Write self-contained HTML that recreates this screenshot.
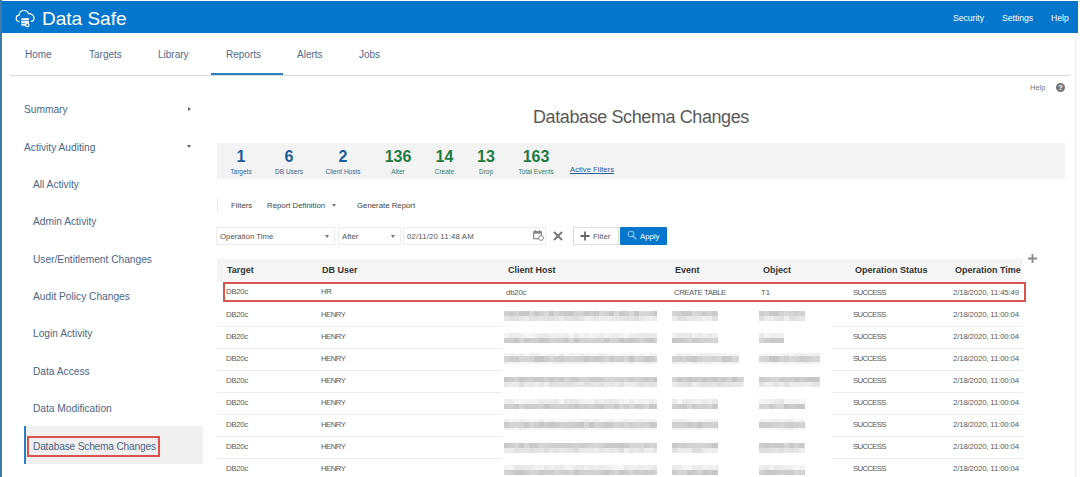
<!DOCTYPE html>
<html><head><meta charset="utf-8"><style>
*{margin:0;padding:0;box-sizing:border-box}
html,body{width:1080px;height:477px;overflow:hidden;background:#fff;font-family:"Liberation Sans",sans-serif;position:relative}
.a{position:absolute;white-space:nowrap}
.ht{color:#fff}
.nav{color:#4f6a8f;font-size:10px}
.side{color:#4b6688;font-size:10.2px}
.stn{font-weight:bold;font-size:16px;text-align:center}
.stl{font-size:6.5px;text-align:center}
.stl.blue{color:#3a6593}
.stl.green{color:#3a7a55}
.blue{color:#1d5d98}
.green{color:#1d7b45}
.tb{color:#444;font-size:7.8px}
.th{color:#333;font-weight:bold;font-size:9px}
.td{color:#5a5a5a;font-size:7.8px}
.sep{position:absolute;height:1px;background:#ececec}
.tri{position:absolute;width:0;height:0;border-top:3px solid #777;border-left:2.5px solid transparent;border-right:2.5px solid transparent}
</style></head><body>
<div class="a" style="left:2px;top:1px;width:1076px;height:32px;background:#0477cc"></div>
<div class="a" style="left:0;top:0;width:2px;height:477px;background:#3d7bab"></div>
<svg class="a" style="left:10px;top:4px" width="30" height="30" viewBox="0 0 30 30">
<path d="M9.4 17.6 C7.4 17.6 6.2 16.2 6.2 14.4 C6.2 12.6 7.4 11.3 9.1 11.2 C9.4 8.3 11.4 6.5 14 6.5 C16.3 6.5 17.9 7.8 18.5 9.7 C21.7 9.5 24 11.6 24 14 C24 16 22.7 17.3 20.8 17.5" fill="none" stroke="#fff" stroke-width="1.2"/>
<rect x="11.3" y="14.2" width="7.6" height="2" fill="#fff"/>
<rect x="11.3" y="16.9" width="7.6" height="2" fill="#fff"/>
<rect x="11.3" y="19.6" width="4.6" height="2" fill="#fff"/>
<rect x="11.3" y="22.2" width="4.6" height="0.1" fill="#fff"/>
<circle cx="17.3" cy="21" r="1.7" fill="none" stroke="#fff" stroke-width="1.2"/>
</svg>
<div class="a ht" style="left:42px;top:8px;font-size:19px">Data Safe</div>
<div class="a ht" style="left:953px;top:13px;font-size:8.6px">Security</div>
<div class="a ht" style="left:1002px;top:13px;font-size:8.6px">Settings</div>
<div class="a ht" style="left:1051px;top:13px;font-size:8.6px">Help</div>
<div class="a nav" style="left:25px;top:49px">Home</div>
<div class="a nav" style="left:89px;top:49px">Targets</div>
<div class="a nav" style="left:158px;top:49px">Library</div>
<div class="a nav" style="left:226px;top:49px">Reports</div>
<div class="a nav" style="left:297px;top:49px">Alerts</div>
<div class="a nav" style="left:359px;top:49px">Jobs</div>
<div class="a" style="left:10px;top:75px;width:1060px;height:1px;background:#d5d8dc"></div>
<div class="a" style="left:211px;top:73px;width:72px;height:2px;background:#2f7fc0"></div>
<div class="a side" style="left:24px;top:104px">Summary</div>
<div class="a" style="left:188px;top:107px;width:0;height:0;border-left:3.5px solid #666;border-top:2px solid transparent;border-bottom:2px solid transparent"></div>
<div class="a side" style="left:24px;top:142px">Activity Auditing</div>
<div class="a" style="left:187px;top:145px;width:0;height:0;border-top:3px solid #666;border-left:2px solid transparent;border-right:2px solid transparent"></div>
<div class="a side" style="left:33px;top:179px">All Activity</div>
<div class="a side" style="left:33px;top:216px">Admin Activity</div>
<div class="a side" style="left:33px;top:254px">User/Entitlement Changes</div>
<div class="a side" style="left:33px;top:291px">Audit Policy Changes</div>
<div class="a side" style="left:33px;top:328px">Login Activity</div>
<div class="a side" style="left:33px;top:366px">Data Access</div>
<div class="a side" style="left:33px;top:403px">Data Modification</div>
<div class="a" style="left:24px;top:426px;width:179px;height:38px;background:#f0f0f0;border-left:2px solid #2f7fc0"></div>
<div class="a" style="left:27px;top:436px;width:133px;height:21px;border:2px solid #d9534f"></div>
<div class="a side" style="left:33px;top:441px;letter-spacing:-0.2px">Database Schema Changes</div>
<div class="a" style="left:1030px;top:83px;font-size:7.5px;color:#777">Help</div>
<div class="a" style="left:1056px;top:83px;width:9px;height:9px;border-radius:50%;background:#777;color:#fff;font-size:7.5px;font-weight:bold;text-align:center;line-height:9px">?</div>
<div class="a" style="left:533px;top:107px;font-size:18px;letter-spacing:-0.4px;color:#5a5a5a">Database Schema Changes</div>
<div class="a" style="left:217px;top:143px;width:848px;height:36px;background:#f3f3f3"></div>
<div class="a stn blue" style="left:211px;top:148px;width:60px">1</div>
<div class="a stl blue" style="left:211px;top:168px;width:60px">Targets</div>
<div class="a stn blue" style="left:259px;top:148px;width:60px">6</div>
<div class="a stl blue" style="left:259px;top:168px;width:60px">DB Users</div>
<div class="a stn blue" style="left:313px;top:148px;width:60px">2</div>
<div class="a stl blue" style="left:313px;top:168px;width:60px">Client Hosts</div>
<div class="a stn green" style="left:368px;top:148px;width:60px">136</div>
<div class="a stl green" style="left:368px;top:168px;width:60px">Alter</div>
<div class="a stn green" style="left:414.5px;top:148px;width:60px">14</div>
<div class="a stl green" style="left:414.5px;top:168px;width:60px">Create</div>
<div class="a stn green" style="left:456px;top:148px;width:60px">13</div>
<div class="a stl green" style="left:456px;top:168px;width:60px">Drop</div>
<div class="a stn green" style="left:506px;top:148px;width:60px">163</div>
<div class="a stl green" style="left:506px;top:168px;width:60px">Total Events</div>
<div class="a" style="left:570px;top:165px;font-size:7.7px;color:#2c5e9a;text-decoration:underline">Active Filters</div>
<div class="a" style="left:217px;top:199px;width:1px;height:13px;background:#e6e6e6"></div>
<div class="a tb" style="left:231px;top:201px">Filters</div>
<div class="a tb" style="left:267px;top:201px">Report Definition</div>
<div class="tri" style="left:332px;top:204px"></div>
<div class="a tb" style="left:357px;top:201px">Generate Report</div>
<div class="a" style="left:216px;top:227px;width:119px;height:18px;border:1px solid #ececec"></div>
<div class="a tb" style="left:220px;top:232px;color:#555">Operation Time</div>
<div class="tri" style="left:325px;top:235px"></div>
<div class="a" style="left:338px;top:227px;width:63px;height:18px;border:1px solid #ececec"></div>
<div class="a tb" style="left:342px;top:232px;color:#555">After</div>
<div class="tri" style="left:391px;top:235px"></div>
<div class="a" style="left:403px;top:227px;width:143px;height:18px;border:1px solid #ececec"></div>
<div class="a tb" style="left:407px;top:232px;color:#555;letter-spacing:0.15px">02/11/20 11:48 AM</div>
<svg class="a" style="left:533px;top:230px" width="11" height="11" viewBox="0 0 11 11">
<rect x="0.7" y="1.7" width="7.6" height="7" fill="none" stroke="#888" stroke-width="1.2"/>
<rect x="0.7" y="1.7" width="7.6" height="2" fill="#888"/>
<line x1="2.5" y1="0" x2="2.5" y2="2" stroke="#888" stroke-width="1"/><line x1="6.5" y1="0" x2="6.5" y2="2" stroke="#888" stroke-width="1"/>
<circle cx="8" cy="8" r="2.4" fill="#fff" stroke="#888" stroke-width="1"/>
</svg>
<svg class="a" style="left:553px;top:231px" width="10" height="10" viewBox="0 0 10 10">
<path d="M1 1 L9 9 M9 1 L1 9" stroke="#777" stroke-width="2"/></svg>
<div class="a" style="left:573px;top:227px;width:46px;height:18px;border:1px solid #dcdcdc;background:#fff"></div>
<svg class="a" style="left:580px;top:231px" width="10" height="10" viewBox="0 0 10 10">
<path d="M5 0.5 V9.5 M0.5 5 H9.5" stroke="#666" stroke-width="1.8"/></svg>
<div class="a tb" style="left:593px;top:232px;color:#555">Filter</div>
<div class="a" style="left:620px;top:227px;width:47px;height:18px;background:#0477cc;border-radius:1px"></div>
<svg class="a" style="left:627px;top:230px" width="10" height="10" viewBox="0 0 10 10">
<circle cx="4" cy="4" r="2.8" fill="none" stroke="#8fc0ea" stroke-width="1.1"/><path d="M6 6 L9.3 9.3" stroke="#8fc0ea" stroke-width="1.3"/></svg>
<div class="a tb" style="left:640px;top:232px;color:#fff">Apply</div>
<div class="a" style="left:217px;top:259px;width:806px;height:23px;background:#f5f5f5"></div>
<div class="a th" style="left:227px;top:265px">Target</div>
<div class="a th" style="left:322px;top:265px">DB User</div>
<div class="a th" style="left:508px;top:265px">Client Host</div>
<div class="a th" style="left:675px;top:265px">Event</div>
<div class="a th" style="left:763px;top:265px">Object</div>
<div class="a th" style="left:855px;top:265px">Operation Status</div>
<div class="a th" style="left:955px;top:265px">Operation Time</div>
<svg class="a" style="left:1028px;top:254px" width="9" height="9" viewBox="0 0 9 9">
<path d="M4.5 0 V9 M0 4.5 H9" stroke="#888" stroke-width="1.8"/></svg>
<div class="a" style="left:223px;top:282px;width:803px;height:20px;border:2px solid #d9534f"></div>
<div class="a td" style="left:226px;top:287px;letter-spacing:-0.3px">DB20c</div>
<div class="a td" style="left:321px;top:287px;letter-spacing:-0.3px">HR</div>
<div class="a td" style="left:506px;top:288px;letter-spacing:-0.2px">db20c</div>
<div class="a td" style="left:674px;top:288px;letter-spacing:-0.45px">CREATE TABLE</div>
<div class="a td" style="left:761px;top:288px;">T1</div>
<div class="a td" style="left:853px;top:288px;letter-spacing:-0.7px">SUCCESS</div>
<div class="a td" style="left:953px;top:288px;letter-spacing:-0.15px">2/18/2020, 11:45:49</div>
<div class="a td" style="left:226px;top:310px;letter-spacing:-0.3px">DB20c</div>
<div class="a td" style="left:321px;top:310px;letter-spacing:-0.55px">HENRY</div>
<div class="a td" style="left:853px;top:310px;letter-spacing:-0.7px">SUCCESS</div>
<div class="a td" style="left:953px;top:310px;letter-spacing:-0.15px">2/18/2020, 11:00:04</div>
<svg class="a" style="left:504px;top:304px;filter:blur(0.6px)" width="153" height="20"><rect x="0" y="7" width="5" height="5" fill="#d0d0d0"/><rect x="5" y="7" width="5" height="5" fill="#cacaca"/><rect x="10" y="7" width="5" height="5" fill="#d2d2d2"/><rect x="15" y="7" width="5" height="5" fill="#c7c7c7"/><rect x="20" y="7" width="5" height="5" fill="#c8c8c8"/><rect x="25" y="7" width="5" height="5" fill="#d7d7d7"/><rect x="30" y="7" width="5" height="5" fill="#c9c9c9"/><rect x="35" y="7" width="5" height="5" fill="#d1d1d1"/><rect x="40" y="7" width="5" height="5" fill="#d8d8d8"/><rect x="45" y="7" width="5" height="5" fill="#c7c7c7"/><rect x="50" y="7" width="5" height="5" fill="#d6d6d6"/><rect x="55" y="7" width="5" height="5" fill="#cccccc"/><rect x="60" y="7" width="5" height="5" fill="#c7c7c7"/><rect x="65" y="7" width="5" height="5" fill="#c8c8c8"/><rect x="70" y="7" width="5" height="5" fill="#d3d3d3"/><rect x="75" y="7" width="5" height="5" fill="#d3d3d3"/><rect x="80" y="7" width="5" height="5" fill="#c8c8c8"/><rect x="85" y="7" width="5" height="5" fill="#cdcdcd"/><rect x="90" y="7" width="5" height="5" fill="#c8c8c8"/><rect x="95" y="7" width="5" height="5" fill="#d7d7d7"/><rect x="100" y="7" width="5" height="5" fill="#d3d3d3"/><rect x="105" y="7" width="5" height="5" fill="#c7c7c7"/><rect x="110" y="7" width="5" height="5" fill="#d8d8d8"/><rect x="115" y="7" width="5" height="5" fill="#c9c9c9"/><rect x="120" y="7" width="5" height="5" fill="#cdcdcd"/><rect x="125" y="7" width="5" height="5" fill="#d8d8d8"/><rect x="130" y="7" width="5" height="5" fill="#c7c7c7"/><rect x="135" y="7" width="5" height="5" fill="#d8d8d8"/><rect x="140" y="7" width="5" height="5" fill="#d8d8d8"/><rect x="145" y="7" width="5" height="5" fill="#d2d2d2"/><rect x="150" y="7" width="3" height="5" fill="#c7c7c7"/><rect x="0" y="12" width="5" height="5" fill="#e5e5e5"/><rect x="5" y="12" width="5" height="5" fill="#dfdfdf"/><rect x="10" y="12" width="5" height="5" fill="#e2e2e2"/><rect x="15" y="12" width="5" height="5" fill="#e7e7e7"/><rect x="20" y="12" width="5" height="5" fill="#ebebeb"/><rect x="25" y="12" width="5" height="5" fill="#e2e2e2"/><rect x="30" y="12" width="5" height="5" fill="#e1e1e1"/><rect x="35" y="12" width="5" height="5" fill="#e7e7e7"/><rect x="40" y="12" width="5" height="5" fill="#e3e3e3"/><rect x="45" y="12" width="5" height="5" fill="#e1e1e1"/><rect x="50" y="12" width="5" height="5" fill="#e4e4e4"/><rect x="55" y="12" width="5" height="5" fill="#e9e9e9"/><rect x="60" y="12" width="5" height="5" fill="#e1e1e1"/><rect x="65" y="12" width="5" height="5" fill="#e0e0e0"/><rect x="70" y="12" width="5" height="5" fill="#dfdfdf"/><rect x="75" y="12" width="5" height="5" fill="#e4e4e4"/><rect x="80" y="12" width="5" height="5" fill="#ededed"/><rect x="85" y="12" width="5" height="5" fill="#ebebeb"/><rect x="90" y="12" width="5" height="5" fill="#e8e8e8"/><rect x="95" y="12" width="5" height="5" fill="#ececec"/><rect x="100" y="12" width="5" height="5" fill="#ececec"/><rect x="105" y="12" width="5" height="5" fill="#e9e9e9"/><rect x="110" y="12" width="5" height="5" fill="#e7e7e7"/><rect x="115" y="12" width="5" height="5" fill="#e5e5e5"/><rect x="120" y="12" width="5" height="5" fill="#e3e3e3"/><rect x="125" y="12" width="5" height="5" fill="#e5e5e5"/><rect x="130" y="12" width="5" height="5" fill="#e0e0e0"/><rect x="135" y="12" width="5" height="5" fill="#e7e7e7"/><rect x="140" y="12" width="5" height="5" fill="#eeeeee"/><rect x="145" y="12" width="5" height="5" fill="#ededed"/><rect x="150" y="12" width="3" height="5" fill="#e8e8e8"/></svg>
<svg class="a" style="left:672px;top:304px;filter:blur(0.6px)" width="46" height="20"><rect x="0" y="7" width="5" height="5" fill="#d4d4d4"/><rect x="5" y="7" width="5" height="5" fill="#cfcfcf"/><rect x="10" y="7" width="5" height="5" fill="#c8c8c8"/><rect x="15" y="7" width="5" height="5" fill="#c9c9c9"/><rect x="20" y="7" width="5" height="5" fill="#d6d6d6"/><rect x="25" y="7" width="5" height="5" fill="#d3d3d3"/><rect x="30" y="7" width="5" height="5" fill="#cbcbcb"/><rect x="35" y="7" width="5" height="5" fill="#d0d0d0"/><rect x="40" y="7" width="5" height="5" fill="#cacaca"/><rect x="45" y="7" width="1" height="5" fill="#d5d5d5"/><rect x="0" y="12" width="5" height="5" fill="#ebebeb"/><rect x="5" y="12" width="5" height="5" fill="#dfdfdf"/><rect x="10" y="12" width="5" height="5" fill="#e0e0e0"/><rect x="15" y="12" width="5" height="5" fill="#e8e8e8"/><rect x="20" y="12" width="5" height="5" fill="#e8e8e8"/><rect x="25" y="12" width="5" height="5" fill="#e9e9e9"/><rect x="30" y="12" width="5" height="5" fill="#ededed"/><rect x="35" y="12" width="5" height="5" fill="#ececec"/><rect x="40" y="12" width="5" height="5" fill="#e0e0e0"/><rect x="45" y="12" width="1" height="5" fill="#e0e0e0"/></svg>
<svg class="a" style="left:759px;top:304px;filter:blur(0.6px)" width="46" height="20"><rect x="0" y="7" width="5" height="5" fill="#cecece"/><rect x="5" y="7" width="5" height="5" fill="#d5d5d5"/><rect x="10" y="7" width="5" height="5" fill="#c8c8c8"/><rect x="15" y="7" width="5" height="5" fill="#c7c7c7"/><rect x="20" y="7" width="5" height="5" fill="#cfcfcf"/><rect x="25" y="7" width="5" height="5" fill="#d8d8d8"/><rect x="30" y="7" width="5" height="5" fill="#d4d4d4"/><rect x="35" y="7" width="5" height="5" fill="#cfcfcf"/><rect x="40" y="7" width="5" height="5" fill="#d2d2d2"/><rect x="45" y="7" width="1" height="5" fill="#d1d1d1"/><rect x="0" y="12" width="5" height="5" fill="#dedede"/><rect x="5" y="12" width="5" height="5" fill="#ececec"/><rect x="10" y="12" width="5" height="5" fill="#e9e9e9"/><rect x="15" y="12" width="5" height="5" fill="#e3e3e3"/><rect x="20" y="12" width="5" height="5" fill="#e1e1e1"/><rect x="25" y="12" width="5" height="5" fill="#ededed"/><rect x="30" y="12" width="5" height="5" fill="#dfdfdf"/><rect x="35" y="12" width="5" height="5" fill="#e4e4e4"/><rect x="40" y="12" width="5" height="5" fill="#e7e7e7"/><rect x="45" y="12" width="1" height="5" fill="#e2e2e2"/></svg>
<div class="sep" style="left:217px;top:326px;width:285px"></div>
<div class="sep" style="left:832px;top:326px;width:191px"></div>
<div class="a td" style="left:226px;top:332px;letter-spacing:-0.3px">DB20c</div>
<div class="a td" style="left:321px;top:332px;letter-spacing:-0.55px">HENRY</div>
<div class="a td" style="left:853px;top:332px;letter-spacing:-0.7px">SUCCESS</div>
<div class="a td" style="left:953px;top:332px;letter-spacing:-0.15px">2/18/2020, 11:00:04</div>
<svg class="a" style="left:504px;top:326px;filter:blur(0.6px)" width="153" height="20"><rect x="0" y="7" width="5" height="5" fill="#f3f3f3"/><rect x="5" y="7" width="5" height="5" fill="#ebebeb"/><rect x="10" y="7" width="5" height="5" fill="#eeeeee"/><rect x="15" y="7" width="5" height="5" fill="#eeeeee"/><rect x="20" y="7" width="5" height="5" fill="#f6f6f6"/><rect x="25" y="7" width="5" height="5" fill="#f5f5f5"/><rect x="30" y="7" width="5" height="5" fill="#efefef"/><rect x="35" y="7" width="5" height="5" fill="#e9e9e9"/><rect x="40" y="7" width="5" height="5" fill="#eaeaea"/><rect x="45" y="7" width="5" height="5" fill="#efefef"/><rect x="50" y="7" width="5" height="5" fill="#eeeeee"/><rect x="55" y="7" width="5" height="5" fill="#f0f0f0"/><rect x="60" y="7" width="5" height="5" fill="#ececec"/><rect x="65" y="7" width="5" height="5" fill="#f6f6f6"/><rect x="70" y="7" width="5" height="5" fill="#eaeaea"/><rect x="75" y="7" width="5" height="5" fill="#f5f5f5"/><rect x="80" y="7" width="5" height="5" fill="#eeeeee"/><rect x="85" y="7" width="5" height="5" fill="#f5f5f5"/><rect x="90" y="7" width="5" height="5" fill="#f0f0f0"/><rect x="95" y="7" width="5" height="5" fill="#ececec"/><rect x="100" y="7" width="5" height="5" fill="#f3f3f3"/><rect x="105" y="7" width="5" height="5" fill="#eeeeee"/><rect x="110" y="7" width="5" height="5" fill="#ededed"/><rect x="115" y="7" width="5" height="5" fill="#f2f2f2"/><rect x="120" y="7" width="5" height="5" fill="#f6f6f6"/><rect x="125" y="7" width="5" height="5" fill="#eeeeee"/><rect x="130" y="7" width="5" height="5" fill="#ebebeb"/><rect x="135" y="7" width="5" height="5" fill="#eaeaea"/><rect x="140" y="7" width="5" height="5" fill="#e9e9e9"/><rect x="145" y="7" width="5" height="5" fill="#eaeaea"/><rect x="150" y="7" width="3" height="5" fill="#eaeaea"/><rect x="0" y="12" width="5" height="5" fill="#cdcdcd"/><rect x="5" y="12" width="5" height="5" fill="#cdcdcd"/><rect x="10" y="12" width="5" height="5" fill="#c6c6c6"/><rect x="15" y="12" width="5" height="5" fill="#d5d5d5"/><rect x="20" y="12" width="5" height="5" fill="#cbcbcb"/><rect x="25" y="12" width="5" height="5" fill="#cecece"/><rect x="30" y="12" width="5" height="5" fill="#cfcfcf"/><rect x="35" y="12" width="5" height="5" fill="#c6c6c6"/><rect x="40" y="12" width="5" height="5" fill="#cacaca"/><rect x="45" y="12" width="5" height="5" fill="#d3d3d3"/><rect x="50" y="12" width="5" height="5" fill="#d1d1d1"/><rect x="55" y="12" width="5" height="5" fill="#d0d0d0"/><rect x="60" y="12" width="5" height="5" fill="#cacaca"/><rect x="65" y="12" width="5" height="5" fill="#d6d6d6"/><rect x="70" y="12" width="5" height="5" fill="#c7c7c7"/><rect x="75" y="12" width="5" height="5" fill="#d4d4d4"/><rect x="80" y="12" width="5" height="5" fill="#d2d2d2"/><rect x="85" y="12" width="5" height="5" fill="#d2d2d2"/><rect x="90" y="12" width="5" height="5" fill="#d2d2d2"/><rect x="95" y="12" width="5" height="5" fill="#d2d2d2"/><rect x="100" y="12" width="5" height="5" fill="#c9c9c9"/><rect x="105" y="12" width="5" height="5" fill="#d5d5d5"/><rect x="110" y="12" width="5" height="5" fill="#d2d2d2"/><rect x="115" y="12" width="5" height="5" fill="#c7c7c7"/><rect x="120" y="12" width="5" height="5" fill="#cccccc"/><rect x="125" y="12" width="5" height="5" fill="#c8c8c8"/><rect x="130" y="12" width="5" height="5" fill="#cccccc"/><rect x="135" y="12" width="5" height="5" fill="#d4d4d4"/><rect x="140" y="12" width="5" height="5" fill="#cbcbcb"/><rect x="145" y="12" width="5" height="5" fill="#c9c9c9"/><rect x="150" y="12" width="3" height="5" fill="#d0d0d0"/></svg>
<svg class="a" style="left:672px;top:326px;filter:blur(0.6px)" width="46" height="20"><rect x="0" y="7" width="5" height="5" fill="#f1f1f1"/><rect x="5" y="7" width="5" height="5" fill="#e8e8e8"/><rect x="10" y="7" width="5" height="5" fill="#e9e9e9"/><rect x="15" y="7" width="5" height="5" fill="#e8e8e8"/><rect x="20" y="7" width="5" height="5" fill="#f1f1f1"/><rect x="25" y="7" width="5" height="5" fill="#eaeaea"/><rect x="30" y="7" width="5" height="5" fill="#f0f0f0"/><rect x="35" y="7" width="5" height="5" fill="#e9e9e9"/><rect x="40" y="7" width="5" height="5" fill="#ededed"/><rect x="45" y="7" width="1" height="5" fill="#f1f1f1"/><rect x="0" y="12" width="5" height="5" fill="#c6c6c6"/><rect x="5" y="12" width="5" height="5" fill="#c8c8c8"/><rect x="10" y="12" width="5" height="5" fill="#cccccc"/><rect x="15" y="12" width="5" height="5" fill="#d2d2d2"/><rect x="20" y="12" width="5" height="5" fill="#cacaca"/><rect x="25" y="12" width="5" height="5" fill="#cecece"/><rect x="30" y="12" width="5" height="5" fill="#d1d1d1"/><rect x="35" y="12" width="5" height="5" fill="#d1d1d1"/><rect x="40" y="12" width="5" height="5" fill="#d5d5d5"/><rect x="45" y="12" width="1" height="5" fill="#c9c9c9"/></svg>
<svg class="a" style="left:759px;top:326px;filter:blur(0.6px)" width="25" height="20"><rect x="0" y="7" width="5" height="5" fill="#e9e9e9"/><rect x="5" y="7" width="5" height="5" fill="#f5f5f5"/><rect x="10" y="7" width="5" height="5" fill="#efefef"/><rect x="15" y="7" width="5" height="5" fill="#efefef"/><rect x="20" y="7" width="5" height="5" fill="#efefef"/><rect x="0" y="12" width="5" height="5" fill="#d5d5d5"/><rect x="5" y="12" width="5" height="5" fill="#cfcfcf"/><rect x="10" y="12" width="5" height="5" fill="#c8c8c8"/><rect x="15" y="12" width="5" height="5" fill="#cacaca"/><rect x="20" y="12" width="5" height="5" fill="#c9c9c9"/></svg>
<div class="sep" style="left:217px;top:348px;width:285px"></div>
<div class="sep" style="left:832px;top:348px;width:191px"></div>
<div class="a td" style="left:226px;top:354px;letter-spacing:-0.3px">DB20c</div>
<div class="a td" style="left:321px;top:354px;letter-spacing:-0.55px">HENRY</div>
<div class="a td" style="left:853px;top:354px;letter-spacing:-0.7px">SUCCESS</div>
<div class="a td" style="left:953px;top:354px;letter-spacing:-0.15px">2/18/2020, 11:00:04</div>
<svg class="a" style="left:504px;top:348px;filter:blur(0.6px)" width="153" height="20"><rect x="0" y="5" width="5" height="3" fill="#f3f3f3"/><rect x="5" y="5" width="5" height="3" fill="#f2f2f2"/><rect x="10" y="5" width="5" height="3" fill="#f5f5f5"/><rect x="15" y="5" width="5" height="3" fill="#f0f0f0"/><rect x="20" y="5" width="5" height="3" fill="#f6f6f6"/><rect x="25" y="5" width="5" height="3" fill="#eeeeee"/><rect x="30" y="5" width="5" height="3" fill="#f1f1f1"/><rect x="35" y="5" width="5" height="3" fill="#f6f6f6"/><rect x="40" y="5" width="5" height="3" fill="#f3f3f3"/><rect x="45" y="5" width="5" height="3" fill="#f0f0f0"/><rect x="50" y="5" width="5" height="3" fill="#f6f6f6"/><rect x="55" y="5" width="5" height="3" fill="#eeeeee"/><rect x="60" y="5" width="5" height="3" fill="#f6f6f6"/><rect x="65" y="5" width="5" height="3" fill="#f2f2f2"/><rect x="70" y="5" width="5" height="3" fill="#f8f8f8"/><rect x="75" y="5" width="5" height="3" fill="#efefef"/><rect x="80" y="5" width="5" height="3" fill="#f2f2f2"/><rect x="85" y="5" width="5" height="3" fill="#f6f6f6"/><rect x="90" y="5" width="5" height="3" fill="#f3f3f3"/><rect x="95" y="5" width="5" height="3" fill="#f0f0f0"/><rect x="100" y="5" width="5" height="3" fill="#f3f3f3"/><rect x="105" y="5" width="5" height="3" fill="#f1f1f1"/><rect x="110" y="5" width="5" height="3" fill="#f6f6f6"/><rect x="115" y="5" width="5" height="3" fill="#f6f6f6"/><rect x="120" y="5" width="5" height="3" fill="#f6f6f6"/><rect x="125" y="5" width="5" height="3" fill="#f3f3f3"/><rect x="130" y="5" width="5" height="3" fill="#f8f8f8"/><rect x="135" y="5" width="5" height="3" fill="#f1f1f1"/><rect x="140" y="5" width="5" height="3" fill="#f7f7f7"/><rect x="145" y="5" width="5" height="3" fill="#f1f1f1"/><rect x="150" y="5" width="3" height="3" fill="#f1f1f1"/><rect x="0" y="8" width="5" height="6" fill="#d2d2d2"/><rect x="5" y="8" width="5" height="6" fill="#cdcdcd"/><rect x="10" y="8" width="5" height="6" fill="#cccccc"/><rect x="15" y="8" width="5" height="6" fill="#d6d6d6"/><rect x="20" y="8" width="5" height="6" fill="#d5d5d5"/><rect x="25" y="8" width="5" height="6" fill="#d1d1d1"/><rect x="30" y="8" width="5" height="6" fill="#c6c6c6"/><rect x="35" y="8" width="5" height="6" fill="#c6c6c6"/><rect x="40" y="8" width="5" height="6" fill="#cecece"/><rect x="45" y="8" width="5" height="6" fill="#d5d5d5"/><rect x="50" y="8" width="5" height="6" fill="#cecece"/><rect x="55" y="8" width="5" height="6" fill="#cccccc"/><rect x="60" y="8" width="5" height="6" fill="#d1d1d1"/><rect x="65" y="8" width="5" height="6" fill="#d4d4d4"/><rect x="70" y="8" width="5" height="6" fill="#d1d1d1"/><rect x="75" y="8" width="5" height="6" fill="#d1d1d1"/><rect x="80" y="8" width="5" height="6" fill="#c8c8c8"/><rect x="85" y="8" width="5" height="6" fill="#cdcdcd"/><rect x="90" y="8" width="5" height="6" fill="#c9c9c9"/><rect x="95" y="8" width="5" height="6" fill="#cdcdcd"/><rect x="100" y="8" width="5" height="6" fill="#d5d5d5"/><rect x="105" y="8" width="5" height="6" fill="#cccccc"/><rect x="110" y="8" width="5" height="6" fill="#d0d0d0"/><rect x="115" y="8" width="5" height="6" fill="#cccccc"/><rect x="120" y="8" width="5" height="6" fill="#d5d5d5"/><rect x="125" y="8" width="5" height="6" fill="#c6c6c6"/><rect x="130" y="8" width="5" height="6" fill="#d5d5d5"/><rect x="135" y="8" width="5" height="6" fill="#d1d1d1"/><rect x="140" y="8" width="5" height="6" fill="#c8c8c8"/><rect x="145" y="8" width="5" height="6" fill="#c9c9c9"/><rect x="150" y="8" width="3" height="6" fill="#d2d2d2"/><rect x="0" y="14" width="5" height="2" fill="#f1f1f1"/><rect x="5" y="14" width="5" height="2" fill="#f5f5f5"/><rect x="10" y="14" width="5" height="2" fill="#f0f0f0"/><rect x="15" y="14" width="5" height="2" fill="#f4f4f4"/><rect x="20" y="14" width="5" height="2" fill="#f8f8f8"/><rect x="25" y="14" width="5" height="2" fill="#f3f3f3"/><rect x="30" y="14" width="5" height="2" fill="#efefef"/><rect x="35" y="14" width="5" height="2" fill="#f4f4f4"/><rect x="40" y="14" width="5" height="2" fill="#f5f5f5"/><rect x="45" y="14" width="5" height="2" fill="#f4f4f4"/><rect x="50" y="14" width="5" height="2" fill="#efefef"/><rect x="55" y="14" width="5" height="2" fill="#f0f0f0"/><rect x="60" y="14" width="5" height="2" fill="#f0f0f0"/><rect x="65" y="14" width="5" height="2" fill="#f0f0f0"/><rect x="70" y="14" width="5" height="2" fill="#eeeeee"/><rect x="75" y="14" width="5" height="2" fill="#f0f0f0"/><rect x="80" y="14" width="5" height="2" fill="#f7f7f7"/><rect x="85" y="14" width="5" height="2" fill="#f5f5f5"/><rect x="90" y="14" width="5" height="2" fill="#f8f8f8"/><rect x="95" y="14" width="5" height="2" fill="#f0f0f0"/><rect x="100" y="14" width="5" height="2" fill="#f7f7f7"/><rect x="105" y="14" width="5" height="2" fill="#f7f7f7"/><rect x="110" y="14" width="5" height="2" fill="#f5f5f5"/><rect x="115" y="14" width="5" height="2" fill="#f8f8f8"/><rect x="120" y="14" width="5" height="2" fill="#f3f3f3"/><rect x="125" y="14" width="5" height="2" fill="#f0f0f0"/><rect x="130" y="14" width="5" height="2" fill="#f6f6f6"/><rect x="135" y="14" width="5" height="2" fill="#f6f6f6"/><rect x="140" y="14" width="5" height="2" fill="#f0f0f0"/><rect x="145" y="14" width="5" height="2" fill="#eeeeee"/><rect x="150" y="14" width="3" height="2" fill="#eeeeee"/></svg>
<svg class="a" style="left:672px;top:348px;filter:blur(0.6px)" width="67" height="20"><rect x="0" y="5" width="5" height="3" fill="#f8f8f8"/><rect x="5" y="5" width="5" height="3" fill="#efefef"/><rect x="10" y="5" width="5" height="3" fill="#f6f6f6"/><rect x="15" y="5" width="5" height="3" fill="#f0f0f0"/><rect x="20" y="5" width="5" height="3" fill="#f4f4f4"/><rect x="25" y="5" width="5" height="3" fill="#f1f1f1"/><rect x="30" y="5" width="5" height="3" fill="#f1f1f1"/><rect x="35" y="5" width="5" height="3" fill="#eeeeee"/><rect x="40" y="5" width="5" height="3" fill="#f2f2f2"/><rect x="45" y="5" width="5" height="3" fill="#f1f1f1"/><rect x="50" y="5" width="5" height="3" fill="#f2f2f2"/><rect x="55" y="5" width="5" height="3" fill="#f6f6f6"/><rect x="60" y="5" width="5" height="3" fill="#f1f1f1"/><rect x="65" y="5" width="2" height="3" fill="#f7f7f7"/><rect x="0" y="8" width="5" height="6" fill="#d0d0d0"/><rect x="5" y="8" width="5" height="6" fill="#cecece"/><rect x="10" y="8" width="5" height="6" fill="#d3d3d3"/><rect x="15" y="8" width="5" height="6" fill="#cacaca"/><rect x="20" y="8" width="5" height="6" fill="#c7c7c7"/><rect x="25" y="8" width="5" height="6" fill="#d1d1d1"/><rect x="30" y="8" width="5" height="6" fill="#d4d4d4"/><rect x="35" y="8" width="5" height="6" fill="#d6d6d6"/><rect x="40" y="8" width="5" height="6" fill="#d3d3d3"/><rect x="45" y="8" width="5" height="6" fill="#d6d6d6"/><rect x="50" y="8" width="5" height="6" fill="#cacaca"/><rect x="55" y="8" width="5" height="6" fill="#cacaca"/><rect x="60" y="8" width="5" height="6" fill="#d6d6d6"/><rect x="65" y="8" width="2" height="6" fill="#d6d6d6"/><rect x="0" y="14" width="5" height="2" fill="#eeeeee"/><rect x="5" y="14" width="5" height="2" fill="#f5f5f5"/><rect x="10" y="14" width="5" height="2" fill="#f0f0f0"/><rect x="15" y="14" width="5" height="2" fill="#f7f7f7"/><rect x="20" y="14" width="5" height="2" fill="#eeeeee"/><rect x="25" y="14" width="5" height="2" fill="#f0f0f0"/><rect x="30" y="14" width="5" height="2" fill="#f0f0f0"/><rect x="35" y="14" width="5" height="2" fill="#f0f0f0"/><rect x="40" y="14" width="5" height="2" fill="#f5f5f5"/><rect x="45" y="14" width="5" height="2" fill="#f7f7f7"/><rect x="50" y="14" width="5" height="2" fill="#efefef"/><rect x="55" y="14" width="5" height="2" fill="#f6f6f6"/><rect x="60" y="14" width="5" height="2" fill="#eeeeee"/><rect x="65" y="14" width="2" height="2" fill="#f3f3f3"/></svg>
<svg class="a" style="left:759px;top:348px;filter:blur(0.6px)" width="61" height="20"><rect x="0" y="5" width="5" height="3" fill="#f8f8f8"/><rect x="5" y="5" width="5" height="3" fill="#f6f6f6"/><rect x="10" y="5" width="5" height="3" fill="#f6f6f6"/><rect x="15" y="5" width="5" height="3" fill="#f6f6f6"/><rect x="20" y="5" width="5" height="3" fill="#f5f5f5"/><rect x="25" y="5" width="5" height="3" fill="#efefef"/><rect x="30" y="5" width="5" height="3" fill="#f6f6f6"/><rect x="35" y="5" width="5" height="3" fill="#eeeeee"/><rect x="40" y="5" width="5" height="3" fill="#f1f1f1"/><rect x="45" y="5" width="5" height="3" fill="#f1f1f1"/><rect x="50" y="5" width="5" height="3" fill="#f2f2f2"/><rect x="55" y="5" width="5" height="3" fill="#eeeeee"/><rect x="60" y="5" width="1" height="3" fill="#efefef"/><rect x="0" y="8" width="5" height="6" fill="#d6d6d6"/><rect x="5" y="8" width="5" height="6" fill="#d4d4d4"/><rect x="10" y="8" width="5" height="6" fill="#c6c6c6"/><rect x="15" y="8" width="5" height="6" fill="#c8c8c8"/><rect x="20" y="8" width="5" height="6" fill="#d4d4d4"/><rect x="25" y="8" width="5" height="6" fill="#d0d0d0"/><rect x="30" y="8" width="5" height="6" fill="#d6d6d6"/><rect x="35" y="8" width="5" height="6" fill="#d6d6d6"/><rect x="40" y="8" width="5" height="6" fill="#cccccc"/><rect x="45" y="8" width="5" height="6" fill="#cecece"/><rect x="50" y="8" width="5" height="6" fill="#d4d4d4"/><rect x="55" y="8" width="5" height="6" fill="#d6d6d6"/><rect x="60" y="8" width="1" height="6" fill="#d5d5d5"/><rect x="0" y="14" width="5" height="2" fill="#f6f6f6"/><rect x="5" y="14" width="5" height="2" fill="#f1f1f1"/><rect x="10" y="14" width="5" height="2" fill="#f6f6f6"/><rect x="15" y="14" width="5" height="2" fill="#f2f2f2"/><rect x="20" y="14" width="5" height="2" fill="#f6f6f6"/><rect x="25" y="14" width="5" height="2" fill="#f1f1f1"/><rect x="30" y="14" width="5" height="2" fill="#f5f5f5"/><rect x="35" y="14" width="5" height="2" fill="#f0f0f0"/><rect x="40" y="14" width="5" height="2" fill="#f4f4f4"/><rect x="45" y="14" width="5" height="2" fill="#efefef"/><rect x="50" y="14" width="5" height="2" fill="#f4f4f4"/><rect x="55" y="14" width="5" height="2" fill="#f5f5f5"/><rect x="60" y="14" width="1" height="2" fill="#f3f3f3"/></svg>
<div class="sep" style="left:217px;top:370px;width:285px"></div>
<div class="sep" style="left:832px;top:370px;width:191px"></div>
<div class="a td" style="left:226px;top:376px;letter-spacing:-0.3px">DB20c</div>
<div class="a td" style="left:321px;top:376px;letter-spacing:-0.55px">HENRY</div>
<div class="a td" style="left:853px;top:376px;letter-spacing:-0.7px">SUCCESS</div>
<div class="a td" style="left:953px;top:376px;letter-spacing:-0.15px">2/18/2020, 11:00:04</div>
<svg class="a" style="left:504px;top:370px;filter:blur(0.6px)" width="153" height="20"><rect x="0" y="7" width="5" height="5" fill="#c8c8c8"/><rect x="5" y="7" width="5" height="5" fill="#cdcdcd"/><rect x="10" y="7" width="5" height="5" fill="#d3d3d3"/><rect x="15" y="7" width="5" height="5" fill="#c8c8c8"/><rect x="20" y="7" width="5" height="5" fill="#cccccc"/><rect x="25" y="7" width="5" height="5" fill="#cfcfcf"/><rect x="30" y="7" width="5" height="5" fill="#c9c9c9"/><rect x="35" y="7" width="5" height="5" fill="#cacaca"/><rect x="40" y="7" width="5" height="5" fill="#d1d1d1"/><rect x="45" y="7" width="5" height="5" fill="#cacaca"/><rect x="50" y="7" width="5" height="5" fill="#cecece"/><rect x="55" y="7" width="5" height="5" fill="#cacaca"/><rect x="60" y="7" width="5" height="5" fill="#d4d4d4"/><rect x="65" y="7" width="5" height="5" fill="#cdcdcd"/><rect x="70" y="7" width="5" height="5" fill="#c9c9c9"/><rect x="75" y="7" width="5" height="5" fill="#d2d2d2"/><rect x="80" y="7" width="5" height="5" fill="#d5d5d5"/><rect x="85" y="7" width="5" height="5" fill="#cbcbcb"/><rect x="90" y="7" width="5" height="5" fill="#cdcdcd"/><rect x="95" y="7" width="5" height="5" fill="#cbcbcb"/><rect x="100" y="7" width="5" height="5" fill="#d3d3d3"/><rect x="105" y="7" width="5" height="5" fill="#d6d6d6"/><rect x="110" y="7" width="5" height="5" fill="#d2d2d2"/><rect x="115" y="7" width="5" height="5" fill="#d0d0d0"/><rect x="120" y="7" width="5" height="5" fill="#d3d3d3"/><rect x="125" y="7" width="5" height="5" fill="#cccccc"/><rect x="130" y="7" width="5" height="5" fill="#d1d1d1"/><rect x="135" y="7" width="5" height="5" fill="#d0d0d0"/><rect x="140" y="7" width="5" height="5" fill="#c8c8c8"/><rect x="145" y="7" width="5" height="5" fill="#d1d1d1"/><rect x="150" y="7" width="3" height="5" fill="#c6c6c6"/><rect x="0" y="12" width="5" height="5" fill="#e8e8e8"/><rect x="5" y="12" width="5" height="5" fill="#ececec"/><rect x="10" y="12" width="5" height="5" fill="#ececec"/><rect x="15" y="12" width="5" height="5" fill="#dedede"/><rect x="20" y="12" width="5" height="5" fill="#eaeaea"/><rect x="25" y="12" width="5" height="5" fill="#e8e8e8"/><rect x="30" y="12" width="5" height="5" fill="#eeeeee"/><rect x="35" y="12" width="5" height="5" fill="#e7e7e7"/><rect x="40" y="12" width="5" height="5" fill="#eeeeee"/><rect x="45" y="12" width="5" height="5" fill="#e0e0e0"/><rect x="50" y="12" width="5" height="5" fill="#e1e1e1"/><rect x="55" y="12" width="5" height="5" fill="#e5e5e5"/><rect x="60" y="12" width="5" height="5" fill="#e1e1e1"/><rect x="65" y="12" width="5" height="5" fill="#e0e0e0"/><rect x="70" y="12" width="5" height="5" fill="#e6e6e6"/><rect x="75" y="12" width="5" height="5" fill="#e6e6e6"/><rect x="80" y="12" width="5" height="5" fill="#dfdfdf"/><rect x="85" y="12" width="5" height="5" fill="#e3e3e3"/><rect x="90" y="12" width="5" height="5" fill="#e6e6e6"/><rect x="95" y="12" width="5" height="5" fill="#e2e2e2"/><rect x="100" y="12" width="5" height="5" fill="#ebebeb"/><rect x="105" y="12" width="5" height="5" fill="#e6e6e6"/><rect x="110" y="12" width="5" height="5" fill="#eaeaea"/><rect x="115" y="12" width="5" height="5" fill="#e2e2e2"/><rect x="120" y="12" width="5" height="5" fill="#eeeeee"/><rect x="125" y="12" width="5" height="5" fill="#ededed"/><rect x="130" y="12" width="5" height="5" fill="#e8e8e8"/><rect x="135" y="12" width="5" height="5" fill="#e0e0e0"/><rect x="140" y="12" width="5" height="5" fill="#e6e6e6"/><rect x="145" y="12" width="5" height="5" fill="#dfdfdf"/><rect x="150" y="12" width="3" height="5" fill="#e3e3e3"/></svg>
<svg class="a" style="left:672px;top:370px;filter:blur(0.6px)" width="72" height="20"><rect x="0" y="7" width="5" height="5" fill="#d3d3d3"/><rect x="5" y="7" width="5" height="5" fill="#c8c8c8"/><rect x="10" y="7" width="5" height="5" fill="#cecece"/><rect x="15" y="7" width="5" height="5" fill="#c6c6c6"/><rect x="20" y="7" width="5" height="5" fill="#c8c8c8"/><rect x="25" y="7" width="5" height="5" fill="#cecece"/><rect x="30" y="7" width="5" height="5" fill="#c8c8c8"/><rect x="35" y="7" width="5" height="5" fill="#cdcdcd"/><rect x="40" y="7" width="5" height="5" fill="#c8c8c8"/><rect x="45" y="7" width="5" height="5" fill="#cecece"/><rect x="50" y="7" width="5" height="5" fill="#c9c9c9"/><rect x="55" y="7" width="5" height="5" fill="#d4d4d4"/><rect x="60" y="7" width="5" height="5" fill="#c6c6c6"/><rect x="65" y="7" width="5" height="5" fill="#d0d0d0"/><rect x="70" y="7" width="2" height="5" fill="#d7d7d7"/><rect x="0" y="12" width="5" height="5" fill="#ebebeb"/><rect x="5" y="12" width="5" height="5" fill="#e6e6e6"/><rect x="10" y="12" width="5" height="5" fill="#e2e2e2"/><rect x="15" y="12" width="5" height="5" fill="#dfdfdf"/><rect x="20" y="12" width="5" height="5" fill="#eeeeee"/><rect x="25" y="12" width="5" height="5" fill="#e5e5e5"/><rect x="30" y="12" width="5" height="5" fill="#e1e1e1"/><rect x="35" y="12" width="5" height="5" fill="#e3e3e3"/><rect x="40" y="12" width="5" height="5" fill="#e6e6e6"/><rect x="45" y="12" width="5" height="5" fill="#dfdfdf"/><rect x="50" y="12" width="5" height="5" fill="#e3e3e3"/><rect x="55" y="12" width="5" height="5" fill="#e4e4e4"/><rect x="60" y="12" width="5" height="5" fill="#e7e7e7"/><rect x="65" y="12" width="5" height="5" fill="#e7e7e7"/><rect x="70" y="12" width="2" height="5" fill="#eeeeee"/></svg>
<svg class="a" style="left:759px;top:370px;filter:blur(0.6px)" width="61" height="20"><rect x="0" y="7" width="5" height="5" fill="#cccccc"/><rect x="5" y="7" width="5" height="5" fill="#cfcfcf"/><rect x="10" y="7" width="5" height="5" fill="#d4d4d4"/><rect x="15" y="7" width="5" height="5" fill="#d6d6d6"/><rect x="20" y="7" width="5" height="5" fill="#cbcbcb"/><rect x="25" y="7" width="5" height="5" fill="#cecece"/><rect x="30" y="7" width="5" height="5" fill="#d1d1d1"/><rect x="35" y="7" width="5" height="5" fill="#c6c6c6"/><rect x="40" y="7" width="5" height="5" fill="#cecece"/><rect x="45" y="7" width="5" height="5" fill="#c7c7c7"/><rect x="50" y="7" width="5" height="5" fill="#c6c6c6"/><rect x="55" y="7" width="5" height="5" fill="#c6c6c6"/><rect x="60" y="7" width="1" height="5" fill="#d6d6d6"/><rect x="0" y="12" width="5" height="5" fill="#e4e4e4"/><rect x="5" y="12" width="5" height="5" fill="#eeeeee"/><rect x="10" y="12" width="5" height="5" fill="#ededed"/><rect x="15" y="12" width="5" height="5" fill="#e5e5e5"/><rect x="20" y="12" width="5" height="5" fill="#ececec"/><rect x="25" y="12" width="5" height="5" fill="#e1e1e1"/><rect x="30" y="12" width="5" height="5" fill="#ebebeb"/><rect x="35" y="12" width="5" height="5" fill="#ededed"/><rect x="40" y="12" width="5" height="5" fill="#eaeaea"/><rect x="45" y="12" width="5" height="5" fill="#eeeeee"/><rect x="50" y="12" width="5" height="5" fill="#e7e7e7"/><rect x="55" y="12" width="5" height="5" fill="#e4e4e4"/><rect x="60" y="12" width="1" height="5" fill="#e5e5e5"/></svg>
<div class="sep" style="left:217px;top:392px;width:285px"></div>
<div class="sep" style="left:832px;top:392px;width:191px"></div>
<div class="a td" style="left:226px;top:398px;letter-spacing:-0.3px">DB20c</div>
<div class="a td" style="left:321px;top:398px;letter-spacing:-0.55px">HENRY</div>
<div class="a td" style="left:853px;top:398px;letter-spacing:-0.7px">SUCCESS</div>
<div class="a td" style="left:953px;top:398px;letter-spacing:-0.15px">2/18/2020, 11:00:04</div>
<svg class="a" style="left:504px;top:392px;filter:blur(0.6px)" width="153" height="20"><rect x="0" y="7" width="5" height="5" fill="#ededed"/><rect x="5" y="7" width="5" height="5" fill="#ebebeb"/><rect x="10" y="7" width="5" height="5" fill="#f5f5f5"/><rect x="15" y="7" width="5" height="5" fill="#f6f6f6"/><rect x="20" y="7" width="5" height="5" fill="#f3f3f3"/><rect x="25" y="7" width="5" height="5" fill="#f3f3f3"/><rect x="30" y="7" width="5" height="5" fill="#f2f2f2"/><rect x="35" y="7" width="5" height="5" fill="#eaeaea"/><rect x="40" y="7" width="5" height="5" fill="#eeeeee"/><rect x="45" y="7" width="5" height="5" fill="#ededed"/><rect x="50" y="7" width="5" height="5" fill="#e8e8e8"/><rect x="55" y="7" width="5" height="5" fill="#f5f5f5"/><rect x="60" y="7" width="5" height="5" fill="#eaeaea"/><rect x="65" y="7" width="5" height="5" fill="#e8e8e8"/><rect x="70" y="7" width="5" height="5" fill="#e9e9e9"/><rect x="75" y="7" width="5" height="5" fill="#f2f2f2"/><rect x="80" y="7" width="5" height="5" fill="#f3f3f3"/><rect x="85" y="7" width="5" height="5" fill="#f6f6f6"/><rect x="90" y="7" width="5" height="5" fill="#ececec"/><rect x="95" y="7" width="5" height="5" fill="#eeeeee"/><rect x="100" y="7" width="5" height="5" fill="#eaeaea"/><rect x="105" y="7" width="5" height="5" fill="#e8e8e8"/><rect x="110" y="7" width="5" height="5" fill="#e9e9e9"/><rect x="115" y="7" width="5" height="5" fill="#f2f2f2"/><rect x="120" y="7" width="5" height="5" fill="#f5f5f5"/><rect x="125" y="7" width="5" height="5" fill="#eeeeee"/><rect x="130" y="7" width="5" height="5" fill="#f5f5f5"/><rect x="135" y="7" width="5" height="5" fill="#f0f0f0"/><rect x="140" y="7" width="5" height="5" fill="#f2f2f2"/><rect x="145" y="7" width="5" height="5" fill="#ececec"/><rect x="150" y="7" width="3" height="5" fill="#f1f1f1"/><rect x="0" y="12" width="5" height="5" fill="#cdcdcd"/><rect x="5" y="12" width="5" height="5" fill="#cfcfcf"/><rect x="10" y="12" width="5" height="5" fill="#c7c7c7"/><rect x="15" y="12" width="5" height="5" fill="#d4d4d4"/><rect x="20" y="12" width="5" height="5" fill="#cbcbcb"/><rect x="25" y="12" width="5" height="5" fill="#cbcbcb"/><rect x="30" y="12" width="5" height="5" fill="#cecece"/><rect x="35" y="12" width="5" height="5" fill="#d4d4d4"/><rect x="40" y="12" width="5" height="5" fill="#c6c6c6"/><rect x="45" y="12" width="5" height="5" fill="#cecece"/><rect x="50" y="12" width="5" height="5" fill="#d1d1d1"/><rect x="55" y="12" width="5" height="5" fill="#d0d0d0"/><rect x="60" y="12" width="5" height="5" fill="#d0d0d0"/><rect x="65" y="12" width="5" height="5" fill="#cdcdcd"/><rect x="70" y="12" width="5" height="5" fill="#c7c7c7"/><rect x="75" y="12" width="5" height="5" fill="#cfcfcf"/><rect x="80" y="12" width="5" height="5" fill="#cccccc"/><rect x="85" y="12" width="5" height="5" fill="#d1d1d1"/><rect x="90" y="12" width="5" height="5" fill="#cbcbcb"/><rect x="95" y="12" width="5" height="5" fill="#c6c6c6"/><rect x="100" y="12" width="5" height="5" fill="#d0d0d0"/><rect x="105" y="12" width="5" height="5" fill="#d2d2d2"/><rect x="110" y="12" width="5" height="5" fill="#c8c8c8"/><rect x="115" y="12" width="5" height="5" fill="#d5d5d5"/><rect x="120" y="12" width="5" height="5" fill="#cecece"/><rect x="125" y="12" width="5" height="5" fill="#d6d6d6"/><rect x="130" y="12" width="5" height="5" fill="#cccccc"/><rect x="135" y="12" width="5" height="5" fill="#cdcdcd"/><rect x="140" y="12" width="5" height="5" fill="#d6d6d6"/><rect x="145" y="12" width="5" height="5" fill="#c6c6c6"/><rect x="150" y="12" width="3" height="5" fill="#c8c8c8"/></svg>
<svg class="a" style="left:672px;top:392px;filter:blur(0.6px)" width="46" height="20"><rect x="0" y="7" width="5" height="5" fill="#ececec"/><rect x="5" y="7" width="5" height="5" fill="#f5f5f5"/><rect x="10" y="7" width="5" height="5" fill="#e9e9e9"/><rect x="15" y="7" width="5" height="5" fill="#eaeaea"/><rect x="20" y="7" width="5" height="5" fill="#eeeeee"/><rect x="25" y="7" width="5" height="5" fill="#f1f1f1"/><rect x="30" y="7" width="5" height="5" fill="#e8e8e8"/><rect x="35" y="7" width="5" height="5" fill="#eeeeee"/><rect x="40" y="7" width="5" height="5" fill="#e8e8e8"/><rect x="45" y="7" width="1" height="5" fill="#ececec"/><rect x="0" y="12" width="5" height="5" fill="#cfcfcf"/><rect x="5" y="12" width="5" height="5" fill="#cdcdcd"/><rect x="10" y="12" width="5" height="5" fill="#c8c8c8"/><rect x="15" y="12" width="5" height="5" fill="#d6d6d6"/><rect x="20" y="12" width="5" height="5" fill="#cacaca"/><rect x="25" y="12" width="5" height="5" fill="#d2d2d2"/><rect x="30" y="12" width="5" height="5" fill="#d0d0d0"/><rect x="35" y="12" width="5" height="5" fill="#d5d5d5"/><rect x="40" y="12" width="5" height="5" fill="#cacaca"/><rect x="45" y="12" width="1" height="5" fill="#cfcfcf"/></svg>
<svg class="a" style="left:759px;top:392px;filter:blur(0.6px)" width="46" height="20"><rect x="0" y="7" width="5" height="5" fill="#f3f3f3"/><rect x="5" y="7" width="5" height="5" fill="#f1f1f1"/><rect x="10" y="7" width="5" height="5" fill="#f2f2f2"/><rect x="15" y="7" width="5" height="5" fill="#eaeaea"/><rect x="20" y="7" width="5" height="5" fill="#e8e8e8"/><rect x="25" y="7" width="5" height="5" fill="#f5f5f5"/><rect x="30" y="7" width="5" height="5" fill="#f5f5f5"/><rect x="35" y="7" width="5" height="5" fill="#f3f3f3"/><rect x="40" y="7" width="5" height="5" fill="#f6f6f6"/><rect x="45" y="7" width="1" height="5" fill="#f0f0f0"/><rect x="0" y="12" width="5" height="5" fill="#d3d3d3"/><rect x="5" y="12" width="5" height="5" fill="#d6d6d6"/><rect x="10" y="12" width="5" height="5" fill="#cacaca"/><rect x="15" y="12" width="5" height="5" fill="#d6d6d6"/><rect x="20" y="12" width="5" height="5" fill="#d6d6d6"/><rect x="25" y="12" width="5" height="5" fill="#c6c6c6"/><rect x="30" y="12" width="5" height="5" fill="#cdcdcd"/><rect x="35" y="12" width="5" height="5" fill="#c8c8c8"/><rect x="40" y="12" width="5" height="5" fill="#c6c6c6"/><rect x="45" y="12" width="1" height="5" fill="#c7c7c7"/></svg>
<div class="sep" style="left:217px;top:414px;width:285px"></div>
<div class="sep" style="left:832px;top:414px;width:191px"></div>
<div class="a td" style="left:226px;top:420px;letter-spacing:-0.3px">DB20c</div>
<div class="a td" style="left:321px;top:420px;letter-spacing:-0.55px">HENRY</div>
<div class="a td" style="left:853px;top:420px;letter-spacing:-0.7px">SUCCESS</div>
<div class="a td" style="left:953px;top:420px;letter-spacing:-0.15px">2/18/2020, 11:00:04</div>
<svg class="a" style="left:504px;top:414px;filter:blur(0.6px)" width="153" height="20"><rect x="0" y="5" width="5" height="3" fill="#f0f0f0"/><rect x="5" y="5" width="5" height="3" fill="#f8f8f8"/><rect x="10" y="5" width="5" height="3" fill="#f3f3f3"/><rect x="15" y="5" width="5" height="3" fill="#efefef"/><rect x="20" y="5" width="5" height="3" fill="#f4f4f4"/><rect x="25" y="5" width="5" height="3" fill="#f5f5f5"/><rect x="30" y="5" width="5" height="3" fill="#f6f6f6"/><rect x="35" y="5" width="5" height="3" fill="#eeeeee"/><rect x="40" y="5" width="5" height="3" fill="#f8f8f8"/><rect x="45" y="5" width="5" height="3" fill="#eeeeee"/><rect x="50" y="5" width="5" height="3" fill="#f8f8f8"/><rect x="55" y="5" width="5" height="3" fill="#f6f6f6"/><rect x="60" y="5" width="5" height="3" fill="#f8f8f8"/><rect x="65" y="5" width="5" height="3" fill="#f1f1f1"/><rect x="70" y="5" width="5" height="3" fill="#f5f5f5"/><rect x="75" y="5" width="5" height="3" fill="#f2f2f2"/><rect x="80" y="5" width="5" height="3" fill="#eeeeee"/><rect x="85" y="5" width="5" height="3" fill="#f5f5f5"/><rect x="90" y="5" width="5" height="3" fill="#efefef"/><rect x="95" y="5" width="5" height="3" fill="#f6f6f6"/><rect x="100" y="5" width="5" height="3" fill="#f6f6f6"/><rect x="105" y="5" width="5" height="3" fill="#efefef"/><rect x="110" y="5" width="5" height="3" fill="#f8f8f8"/><rect x="115" y="5" width="5" height="3" fill="#f6f6f6"/><rect x="120" y="5" width="5" height="3" fill="#efefef"/><rect x="125" y="5" width="5" height="3" fill="#f5f5f5"/><rect x="130" y="5" width="5" height="3" fill="#f2f2f2"/><rect x="135" y="5" width="5" height="3" fill="#efefef"/><rect x="140" y="5" width="5" height="3" fill="#f2f2f2"/><rect x="145" y="5" width="5" height="3" fill="#f1f1f1"/><rect x="150" y="5" width="3" height="3" fill="#f1f1f1"/><rect x="0" y="8" width="5" height="6" fill="#cdcdcd"/><rect x="5" y="8" width="5" height="6" fill="#d4d4d4"/><rect x="10" y="8" width="5" height="6" fill="#d5d5d5"/><rect x="15" y="8" width="5" height="6" fill="#d2d2d2"/><rect x="20" y="8" width="5" height="6" fill="#c8c8c8"/><rect x="25" y="8" width="5" height="6" fill="#d5d5d5"/><rect x="30" y="8" width="5" height="6" fill="#cfcfcf"/><rect x="35" y="8" width="5" height="6" fill="#c7c7c7"/><rect x="40" y="8" width="5" height="6" fill="#cccccc"/><rect x="45" y="8" width="5" height="6" fill="#c8c8c8"/><rect x="50" y="8" width="5" height="6" fill="#cacaca"/><rect x="55" y="8" width="5" height="6" fill="#d0d0d0"/><rect x="60" y="8" width="5" height="6" fill="#cecece"/><rect x="65" y="8" width="5" height="6" fill="#cfcfcf"/><rect x="70" y="8" width="5" height="6" fill="#cacaca"/><rect x="75" y="8" width="5" height="6" fill="#c6c6c6"/><rect x="80" y="8" width="5" height="6" fill="#d5d5d5"/><rect x="85" y="8" width="5" height="6" fill="#c7c7c7"/><rect x="90" y="8" width="5" height="6" fill="#d5d5d5"/><rect x="95" y="8" width="5" height="6" fill="#cecece"/><rect x="100" y="8" width="5" height="6" fill="#c9c9c9"/><rect x="105" y="8" width="5" height="6" fill="#cccccc"/><rect x="110" y="8" width="5" height="6" fill="#d5d5d5"/><rect x="115" y="8" width="5" height="6" fill="#cfcfcf"/><rect x="120" y="8" width="5" height="6" fill="#d6d6d6"/><rect x="125" y="8" width="5" height="6" fill="#cfcfcf"/><rect x="130" y="8" width="5" height="6" fill="#d4d4d4"/><rect x="135" y="8" width="5" height="6" fill="#d4d4d4"/><rect x="140" y="8" width="5" height="6" fill="#d4d4d4"/><rect x="145" y="8" width="5" height="6" fill="#c9c9c9"/><rect x="150" y="8" width="3" height="6" fill="#cccccc"/><rect x="0" y="14" width="5" height="2" fill="#f2f2f2"/><rect x="5" y="14" width="5" height="2" fill="#efefef"/><rect x="10" y="14" width="5" height="2" fill="#f5f5f5"/><rect x="15" y="14" width="5" height="2" fill="#eeeeee"/><rect x="20" y="14" width="5" height="2" fill="#f2f2f2"/><rect x="25" y="14" width="5" height="2" fill="#f5f5f5"/><rect x="30" y="14" width="5" height="2" fill="#efefef"/><rect x="35" y="14" width="5" height="2" fill="#f6f6f6"/><rect x="40" y="14" width="5" height="2" fill="#f5f5f5"/><rect x="45" y="14" width="5" height="2" fill="#f2f2f2"/><rect x="50" y="14" width="5" height="2" fill="#f4f4f4"/><rect x="55" y="14" width="5" height="2" fill="#f1f1f1"/><rect x="60" y="14" width="5" height="2" fill="#f1f1f1"/><rect x="65" y="14" width="5" height="2" fill="#efefef"/><rect x="70" y="14" width="5" height="2" fill="#f7f7f7"/><rect x="75" y="14" width="5" height="2" fill="#efefef"/><rect x="80" y="14" width="5" height="2" fill="#f0f0f0"/><rect x="85" y="14" width="5" height="2" fill="#f6f6f6"/><rect x="90" y="14" width="5" height="2" fill="#f2f2f2"/><rect x="95" y="14" width="5" height="2" fill="#f3f3f3"/><rect x="100" y="14" width="5" height="2" fill="#f0f0f0"/><rect x="105" y="14" width="5" height="2" fill="#f7f7f7"/><rect x="110" y="14" width="5" height="2" fill="#f8f8f8"/><rect x="115" y="14" width="5" height="2" fill="#f6f6f6"/><rect x="120" y="14" width="5" height="2" fill="#f2f2f2"/><rect x="125" y="14" width="5" height="2" fill="#efefef"/><rect x="130" y="14" width="5" height="2" fill="#f3f3f3"/><rect x="135" y="14" width="5" height="2" fill="#f1f1f1"/><rect x="140" y="14" width="5" height="2" fill="#f5f5f5"/><rect x="145" y="14" width="5" height="2" fill="#f5f5f5"/><rect x="150" y="14" width="3" height="2" fill="#f4f4f4"/></svg>
<svg class="a" style="left:672px;top:414px;filter:blur(0.6px)" width="46" height="20"><rect x="0" y="5" width="5" height="3" fill="#eeeeee"/><rect x="5" y="5" width="5" height="3" fill="#f0f0f0"/><rect x="10" y="5" width="5" height="3" fill="#eeeeee"/><rect x="15" y="5" width="5" height="3" fill="#f5f5f5"/><rect x="20" y="5" width="5" height="3" fill="#f8f8f8"/><rect x="25" y="5" width="5" height="3" fill="#f5f5f5"/><rect x="30" y="5" width="5" height="3" fill="#f4f4f4"/><rect x="35" y="5" width="5" height="3" fill="#f2f2f2"/><rect x="40" y="5" width="5" height="3" fill="#f0f0f0"/><rect x="45" y="5" width="1" height="3" fill="#f4f4f4"/><rect x="0" y="8" width="5" height="6" fill="#d1d1d1"/><rect x="5" y="8" width="5" height="6" fill="#d2d2d2"/><rect x="10" y="8" width="5" height="6" fill="#d0d0d0"/><rect x="15" y="8" width="5" height="6" fill="#c9c9c9"/><rect x="20" y="8" width="5" height="6" fill="#d0d0d0"/><rect x="25" y="8" width="5" height="6" fill="#c6c6c6"/><rect x="30" y="8" width="5" height="6" fill="#d0d0d0"/><rect x="35" y="8" width="5" height="6" fill="#d0d0d0"/><rect x="40" y="8" width="5" height="6" fill="#d2d2d2"/><rect x="45" y="8" width="1" height="6" fill="#c9c9c9"/><rect x="0" y="14" width="5" height="2" fill="#f1f1f1"/><rect x="5" y="14" width="5" height="2" fill="#eeeeee"/><rect x="10" y="14" width="5" height="2" fill="#f2f2f2"/><rect x="15" y="14" width="5" height="2" fill="#f2f2f2"/><rect x="20" y="14" width="5" height="2" fill="#f3f3f3"/><rect x="25" y="14" width="5" height="2" fill="#efefef"/><rect x="30" y="14" width="5" height="2" fill="#f4f4f4"/><rect x="35" y="14" width="5" height="2" fill="#f4f4f4"/><rect x="40" y="14" width="5" height="2" fill="#f7f7f7"/><rect x="45" y="14" width="1" height="2" fill="#efefef"/></svg>
<svg class="a" style="left:759px;top:414px;filter:blur(0.6px)" width="46" height="20"><rect x="0" y="5" width="5" height="3" fill="#f3f3f3"/><rect x="5" y="5" width="5" height="3" fill="#f4f4f4"/><rect x="10" y="5" width="5" height="3" fill="#f2f2f2"/><rect x="15" y="5" width="5" height="3" fill="#eeeeee"/><rect x="20" y="5" width="5" height="3" fill="#f2f2f2"/><rect x="25" y="5" width="5" height="3" fill="#efefef"/><rect x="30" y="5" width="5" height="3" fill="#eeeeee"/><rect x="35" y="5" width="5" height="3" fill="#f8f8f8"/><rect x="40" y="5" width="5" height="3" fill="#f2f2f2"/><rect x="45" y="5" width="1" height="3" fill="#f8f8f8"/><rect x="0" y="8" width="5" height="6" fill="#cacaca"/><rect x="5" y="8" width="5" height="6" fill="#cdcdcd"/><rect x="10" y="8" width="5" height="6" fill="#cecece"/><rect x="15" y="8" width="5" height="6" fill="#d3d3d3"/><rect x="20" y="8" width="5" height="6" fill="#d6d6d6"/><rect x="25" y="8" width="5" height="6" fill="#d0d0d0"/><rect x="30" y="8" width="5" height="6" fill="#cccccc"/><rect x="35" y="8" width="5" height="6" fill="#d1d1d1"/><rect x="40" y="8" width="5" height="6" fill="#d3d3d3"/><rect x="45" y="8" width="1" height="6" fill="#c6c6c6"/><rect x="0" y="14" width="5" height="2" fill="#f8f8f8"/><rect x="5" y="14" width="5" height="2" fill="#f4f4f4"/><rect x="10" y="14" width="5" height="2" fill="#f6f6f6"/><rect x="15" y="14" width="5" height="2" fill="#f6f6f6"/><rect x="20" y="14" width="5" height="2" fill="#f1f1f1"/><rect x="25" y="14" width="5" height="2" fill="#efefef"/><rect x="30" y="14" width="5" height="2" fill="#eeeeee"/><rect x="35" y="14" width="5" height="2" fill="#f4f4f4"/><rect x="40" y="14" width="5" height="2" fill="#f5f5f5"/><rect x="45" y="14" width="1" height="2" fill="#f7f7f7"/></svg>
<div class="sep" style="left:217px;top:436px;width:285px"></div>
<div class="sep" style="left:832px;top:436px;width:191px"></div>
<div class="a td" style="left:226px;top:442px;letter-spacing:-0.3px">DB20c</div>
<div class="a td" style="left:321px;top:442px;letter-spacing:-0.55px">HENRY</div>
<div class="a td" style="left:853px;top:442px;letter-spacing:-0.7px">SUCCESS</div>
<div class="a td" style="left:953px;top:442px;letter-spacing:-0.15px">2/18/2020, 11:00:04</div>
<svg class="a" style="left:504px;top:436px;filter:blur(0.6px)" width="153" height="20"><rect x="0" y="7" width="5" height="5" fill="#cacaca"/><rect x="5" y="7" width="5" height="5" fill="#cfcfcf"/><rect x="10" y="7" width="5" height="5" fill="#d5d5d5"/><rect x="15" y="7" width="5" height="5" fill="#c7c7c7"/><rect x="20" y="7" width="5" height="5" fill="#d7d7d7"/><rect x="25" y="7" width="5" height="5" fill="#cacaca"/><rect x="30" y="7" width="5" height="5" fill="#cbcbcb"/><rect x="35" y="7" width="5" height="5" fill="#d5d5d5"/><rect x="40" y="7" width="5" height="5" fill="#d3d3d3"/><rect x="45" y="7" width="5" height="5" fill="#d0d0d0"/><rect x="50" y="7" width="5" height="5" fill="#cfcfcf"/><rect x="55" y="7" width="5" height="5" fill="#cfcfcf"/><rect x="60" y="7" width="5" height="5" fill="#cecece"/><rect x="65" y="7" width="5" height="5" fill="#cecece"/><rect x="70" y="7" width="5" height="5" fill="#d2d2d2"/><rect x="75" y="7" width="5" height="5" fill="#cdcdcd"/><rect x="80" y="7" width="5" height="5" fill="#cfcfcf"/><rect x="85" y="7" width="5" height="5" fill="#d5d5d5"/><rect x="90" y="7" width="5" height="5" fill="#d7d7d7"/><rect x="95" y="7" width="5" height="5" fill="#d2d2d2"/><rect x="100" y="7" width="5" height="5" fill="#c9c9c9"/><rect x="105" y="7" width="5" height="5" fill="#cbcbcb"/><rect x="110" y="7" width="5" height="5" fill="#cbcbcb"/><rect x="115" y="7" width="5" height="5" fill="#c8c8c8"/><rect x="120" y="7" width="5" height="5" fill="#cccccc"/><rect x="125" y="7" width="5" height="5" fill="#d6d6d6"/><rect x="130" y="7" width="5" height="5" fill="#d5d5d5"/><rect x="135" y="7" width="5" height="5" fill="#d7d7d7"/><rect x="140" y="7" width="5" height="5" fill="#cdcdcd"/><rect x="145" y="7" width="5" height="5" fill="#d4d4d4"/><rect x="150" y="7" width="3" height="5" fill="#d0d0d0"/><rect x="0" y="12" width="5" height="5" fill="#ececec"/><rect x="5" y="12" width="5" height="5" fill="#ebebeb"/><rect x="10" y="12" width="5" height="5" fill="#e2e2e2"/><rect x="15" y="12" width="5" height="5" fill="#e4e4e4"/><rect x="20" y="12" width="5" height="5" fill="#e5e5e5"/><rect x="25" y="12" width="5" height="5" fill="#e0e0e0"/><rect x="30" y="12" width="5" height="5" fill="#e3e3e3"/><rect x="35" y="12" width="5" height="5" fill="#e8e8e8"/><rect x="40" y="12" width="5" height="5" fill="#e0e0e0"/><rect x="45" y="12" width="5" height="5" fill="#e8e8e8"/><rect x="50" y="12" width="5" height="5" fill="#e5e5e5"/><rect x="55" y="12" width="5" height="5" fill="#e9e9e9"/><rect x="60" y="12" width="5" height="5" fill="#e6e6e6"/><rect x="65" y="12" width="5" height="5" fill="#e4e4e4"/><rect x="70" y="12" width="5" height="5" fill="#dedede"/><rect x="75" y="12" width="5" height="5" fill="#ebebeb"/><rect x="80" y="12" width="5" height="5" fill="#eaeaea"/><rect x="85" y="12" width="5" height="5" fill="#ebebeb"/><rect x="90" y="12" width="5" height="5" fill="#eeeeee"/><rect x="95" y="12" width="5" height="5" fill="#e4e4e4"/><rect x="100" y="12" width="5" height="5" fill="#eaeaea"/><rect x="105" y="12" width="5" height="5" fill="#e6e6e6"/><rect x="110" y="12" width="5" height="5" fill="#e8e8e8"/><rect x="115" y="12" width="5" height="5" fill="#dfdfdf"/><rect x="120" y="12" width="5" height="5" fill="#ededed"/><rect x="125" y="12" width="5" height="5" fill="#e6e6e6"/><rect x="130" y="12" width="5" height="5" fill="#e9e9e9"/><rect x="135" y="12" width="5" height="5" fill="#e2e2e2"/><rect x="140" y="12" width="5" height="5" fill="#eeeeee"/><rect x="145" y="12" width="5" height="5" fill="#eeeeee"/><rect x="150" y="12" width="3" height="5" fill="#e4e4e4"/></svg>
<svg class="a" style="left:672px;top:436px;filter:blur(0.6px)" width="46" height="20"><rect x="0" y="7" width="5" height="5" fill="#c8c8c8"/><rect x="5" y="7" width="5" height="5" fill="#cecece"/><rect x="10" y="7" width="5" height="5" fill="#cdcdcd"/><rect x="15" y="7" width="5" height="5" fill="#d2d2d2"/><rect x="20" y="7" width="5" height="5" fill="#d2d2d2"/><rect x="25" y="7" width="5" height="5" fill="#d4d4d4"/><rect x="30" y="7" width="5" height="5" fill="#d3d3d3"/><rect x="35" y="7" width="5" height="5" fill="#cfcfcf"/><rect x="40" y="7" width="5" height="5" fill="#c6c6c6"/><rect x="45" y="7" width="1" height="5" fill="#cacaca"/><rect x="0" y="12" width="5" height="5" fill="#dfdfdf"/><rect x="5" y="12" width="5" height="5" fill="#ebebeb"/><rect x="10" y="12" width="5" height="5" fill="#ededed"/><rect x="15" y="12" width="5" height="5" fill="#ededed"/><rect x="20" y="12" width="5" height="5" fill="#dedede"/><rect x="25" y="12" width="5" height="5" fill="#e0e0e0"/><rect x="30" y="12" width="5" height="5" fill="#eaeaea"/><rect x="35" y="12" width="5" height="5" fill="#eeeeee"/><rect x="40" y="12" width="5" height="5" fill="#ececec"/><rect x="45" y="12" width="1" height="5" fill="#ececec"/></svg>
<svg class="a" style="left:759px;top:436px;filter:blur(0.6px)" width="46" height="20"><rect x="0" y="7" width="5" height="5" fill="#cdcdcd"/><rect x="5" y="7" width="5" height="5" fill="#c9c9c9"/><rect x="10" y="7" width="5" height="5" fill="#cdcdcd"/><rect x="15" y="7" width="5" height="5" fill="#cacaca"/><rect x="20" y="7" width="5" height="5" fill="#cacaca"/><rect x="25" y="7" width="5" height="5" fill="#d6d6d6"/><rect x="30" y="7" width="5" height="5" fill="#c9c9c9"/><rect x="35" y="7" width="5" height="5" fill="#d4d4d4"/><rect x="40" y="7" width="5" height="5" fill="#c8c8c8"/><rect x="45" y="7" width="1" height="5" fill="#d7d7d7"/><rect x="0" y="12" width="5" height="5" fill="#dfdfdf"/><rect x="5" y="12" width="5" height="5" fill="#dedede"/><rect x="10" y="12" width="5" height="5" fill="#e2e2e2"/><rect x="15" y="12" width="5" height="5" fill="#e5e5e5"/><rect x="20" y="12" width="5" height="5" fill="#dfdfdf"/><rect x="25" y="12" width="5" height="5" fill="#e7e7e7"/><rect x="30" y="12" width="5" height="5" fill="#e2e2e2"/><rect x="35" y="12" width="5" height="5" fill="#e6e6e6"/><rect x="40" y="12" width="5" height="5" fill="#eeeeee"/><rect x="45" y="12" width="1" height="5" fill="#ebebeb"/></svg>
<div class="sep" style="left:217px;top:458px;width:285px"></div>
<div class="sep" style="left:832px;top:458px;width:191px"></div>
<div class="a td" style="left:226px;top:464px;letter-spacing:-0.3px">DB20c</div>
<div class="a td" style="left:321px;top:464px;letter-spacing:-0.55px">HENRY</div>
<div class="a td" style="left:853px;top:464px;letter-spacing:-0.7px">SUCCESS</div>
<div class="a td" style="left:953px;top:464px;letter-spacing:-0.15px">2/18/2020, 11:00:04</div>
<svg class="a" style="left:504px;top:458px;filter:blur(0.6px)" width="153" height="20"><rect x="0" y="7" width="5" height="5" fill="#f3f3f3"/><rect x="5" y="7" width="5" height="5" fill="#f4f4f4"/><rect x="10" y="7" width="5" height="5" fill="#e9e9e9"/><rect x="15" y="7" width="5" height="5" fill="#e9e9e9"/><rect x="20" y="7" width="5" height="5" fill="#e9e9e9"/><rect x="25" y="7" width="5" height="5" fill="#ececec"/><rect x="30" y="7" width="5" height="5" fill="#f0f0f0"/><rect x="35" y="7" width="5" height="5" fill="#f1f1f1"/><rect x="40" y="7" width="5" height="5" fill="#ebebeb"/><rect x="45" y="7" width="5" height="5" fill="#eeeeee"/><rect x="50" y="7" width="5" height="5" fill="#ececec"/><rect x="55" y="7" width="5" height="5" fill="#ebebeb"/><rect x="60" y="7" width="5" height="5" fill="#f4f4f4"/><rect x="65" y="7" width="5" height="5" fill="#f1f1f1"/><rect x="70" y="7" width="5" height="5" fill="#e8e8e8"/><rect x="75" y="7" width="5" height="5" fill="#e8e8e8"/><rect x="80" y="7" width="5" height="5" fill="#f0f0f0"/><rect x="85" y="7" width="5" height="5" fill="#ececec"/><rect x="90" y="7" width="5" height="5" fill="#efefef"/><rect x="95" y="7" width="5" height="5" fill="#ececec"/><rect x="100" y="7" width="5" height="5" fill="#ededed"/><rect x="105" y="7" width="5" height="5" fill="#f2f2f2"/><rect x="110" y="7" width="5" height="5" fill="#f5f5f5"/><rect x="115" y="7" width="5" height="5" fill="#f6f6f6"/><rect x="120" y="7" width="5" height="5" fill="#ebebeb"/><rect x="125" y="7" width="5" height="5" fill="#efefef"/><rect x="130" y="7" width="5" height="5" fill="#f0f0f0"/><rect x="135" y="7" width="5" height="5" fill="#ebebeb"/><rect x="140" y="7" width="5" height="5" fill="#f0f0f0"/><rect x="145" y="7" width="5" height="5" fill="#ebebeb"/><rect x="150" y="7" width="3" height="5" fill="#e8e8e8"/><rect x="0" y="12" width="5" height="5" fill="#d3d3d3"/><rect x="5" y="12" width="5" height="5" fill="#cfcfcf"/><rect x="10" y="12" width="5" height="5" fill="#c7c7c7"/><rect x="15" y="12" width="5" height="5" fill="#c6c6c6"/><rect x="20" y="12" width="5" height="5" fill="#cccccc"/><rect x="25" y="12" width="5" height="5" fill="#d5d5d5"/><rect x="30" y="12" width="5" height="5" fill="#d3d3d3"/><rect x="35" y="12" width="5" height="5" fill="#c8c8c8"/><rect x="40" y="12" width="5" height="5" fill="#cecece"/><rect x="45" y="12" width="5" height="5" fill="#cdcdcd"/><rect x="50" y="12" width="5" height="5" fill="#d3d3d3"/><rect x="55" y="12" width="5" height="5" fill="#d1d1d1"/><rect x="60" y="12" width="5" height="5" fill="#cdcdcd"/><rect x="65" y="12" width="5" height="5" fill="#d5d5d5"/><rect x="70" y="12" width="5" height="5" fill="#c7c7c7"/><rect x="75" y="12" width="5" height="5" fill="#d0d0d0"/><rect x="80" y="12" width="5" height="5" fill="#d3d3d3"/><rect x="85" y="12" width="5" height="5" fill="#d1d1d1"/><rect x="90" y="12" width="5" height="5" fill="#d2d2d2"/><rect x="95" y="12" width="5" height="5" fill="#cccccc"/><rect x="100" y="12" width="5" height="5" fill="#c6c6c6"/><rect x="105" y="12" width="5" height="5" fill="#cfcfcf"/><rect x="110" y="12" width="5" height="5" fill="#d6d6d6"/><rect x="115" y="12" width="5" height="5" fill="#c8c8c8"/><rect x="120" y="12" width="5" height="5" fill="#cccccc"/><rect x="125" y="12" width="5" height="5" fill="#d5d5d5"/><rect x="130" y="12" width="5" height="5" fill="#cccccc"/><rect x="135" y="12" width="5" height="5" fill="#cfcfcf"/><rect x="140" y="12" width="5" height="5" fill="#cccccc"/><rect x="145" y="12" width="5" height="5" fill="#cdcdcd"/><rect x="150" y="12" width="3" height="5" fill="#d4d4d4"/></svg>
<svg class="a" style="left:672px;top:458px;filter:blur(0.6px)" width="46" height="20"><rect x="0" y="7" width="5" height="5" fill="#ebebeb"/><rect x="5" y="7" width="5" height="5" fill="#ececec"/><rect x="10" y="7" width="5" height="5" fill="#f4f4f4"/><rect x="15" y="7" width="5" height="5" fill="#f6f6f6"/><rect x="20" y="7" width="5" height="5" fill="#ececec"/><rect x="25" y="7" width="5" height="5" fill="#e9e9e9"/><rect x="30" y="7" width="5" height="5" fill="#f1f1f1"/><rect x="35" y="7" width="5" height="5" fill="#efefef"/><rect x="40" y="7" width="5" height="5" fill="#f1f1f1"/><rect x="45" y="7" width="1" height="5" fill="#eaeaea"/><rect x="0" y="12" width="5" height="5" fill="#cdcdcd"/><rect x="5" y="12" width="5" height="5" fill="#d5d5d5"/><rect x="10" y="12" width="5" height="5" fill="#d3d3d3"/><rect x="15" y="12" width="5" height="5" fill="#c7c7c7"/><rect x="20" y="12" width="5" height="5" fill="#cacaca"/><rect x="25" y="12" width="5" height="5" fill="#d2d2d2"/><rect x="30" y="12" width="5" height="5" fill="#c7c7c7"/><rect x="35" y="12" width="5" height="5" fill="#cccccc"/><rect x="40" y="12" width="5" height="5" fill="#c6c6c6"/><rect x="45" y="12" width="1" height="5" fill="#cacaca"/></svg>
<svg class="a" style="left:759px;top:458px;filter:blur(0.6px)" width="46" height="20"><rect x="0" y="7" width="5" height="5" fill="#eeeeee"/><rect x="5" y="7" width="5" height="5" fill="#e8e8e8"/><rect x="10" y="7" width="5" height="5" fill="#f3f3f3"/><rect x="15" y="7" width="5" height="5" fill="#e8e8e8"/><rect x="20" y="7" width="5" height="5" fill="#eaeaea"/><rect x="25" y="7" width="5" height="5" fill="#eeeeee"/><rect x="30" y="7" width="5" height="5" fill="#efefef"/><rect x="35" y="7" width="5" height="5" fill="#f6f6f6"/><rect x="40" y="7" width="5" height="5" fill="#f3f3f3"/><rect x="45" y="7" width="1" height="5" fill="#f6f6f6"/><rect x="0" y="12" width="5" height="5" fill="#d0d0d0"/><rect x="5" y="12" width="5" height="5" fill="#c9c9c9"/><rect x="10" y="12" width="5" height="5" fill="#c8c8c8"/><rect x="15" y="12" width="5" height="5" fill="#cbcbcb"/><rect x="20" y="12" width="5" height="5" fill="#d0d0d0"/><rect x="25" y="12" width="5" height="5" fill="#cccccc"/><rect x="30" y="12" width="5" height="5" fill="#cbcbcb"/><rect x="35" y="12" width="5" height="5" fill="#d6d6d6"/><rect x="40" y="12" width="5" height="5" fill="#d4d4d4"/><rect x="45" y="12" width="1" height="5" fill="#c7c7c7"/></svg>
<div class="a" style="left:1074px;top:33px;width:3px;height:444px;background:#f7f7f7"></div>
</body></html>
